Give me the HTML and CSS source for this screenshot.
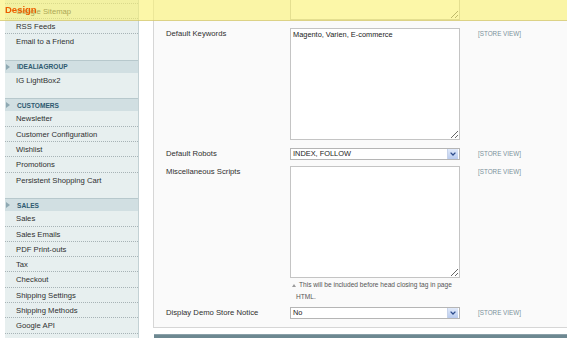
FILE: index.html
```html
<!DOCTYPE html>
<html lang="en">
<head>
  <meta charset="UTF-8" />
  <title>Configuration - Design</title>
  <meta name="viewport" content="width=device-width, initial-scale=1.0" />
  <link rel="stylesheet" href="styles.css">
</head>
<body>
  <div class="page">
    <div class="side">
      <div class="group">
        <div class="group-title"><svg class="tri" width="4" height="6" viewBox="0 0 4 6"><path d="M0 0 L4 3 L0 6 Z" fill="#8ea8b2"/></svg>Catalog</div>
        <ul class="items">
          <li>Catalog</li>
          <li>Configurable Swatches</li>
          <li>Inventory</li>
          <li>Google Sitemap</li>
          <li>RSS Feeds</li>
          <li>Email to a Friend</li>
        </ul>
      </div>
      <div class="group">
        <div class="group-title"><svg class="tri" width="4" height="6" viewBox="0 0 4 6"><path d="M0 0 L4 3 L0 6 Z" fill="#8ea8b2"/></svg>Idealiagroup</div>
        <ul class="items">
          <li>IG LightBox2</li>
        </ul>
      </div>
      <div class="group">
        <div class="group-title"><svg class="tri" width="4" height="6" viewBox="0 0 4 6"><path d="M0 0 L4 3 L0 6 Z" fill="#8ea8b2"/></svg>Customers</div>
        <ul class="items">
          <li>Newsletter</li>
          <li>Customer Configuration</li>
          <li>Wishlist</li>
          <li>Promotions</li>
          <li>Persistent Shopping Cart</li>
        </ul>
      </div>
      <div class="group">
        <div class="group-title"><svg class="tri" width="4" height="6" viewBox="0 0 4 6"><path d="M0 0 L4 3 L0 6 Z" fill="#8ea8b2"/></svg>Sales</div>
        <ul class="items">
          <li>Sales</li>
          <li>Sales Emails</li>
          <li>PDF Print-outs</li>
          <li>Tax</li>
          <li>Checkout</li>
          <li>Shipping Settings</li>
          <li>Shipping Methods</li>
          <li>Google API</li>
          <li>Payment Methods</li>
          <li>Payment Services</li>
        </ul>
      </div>
    </div>

    <div class="main">
      <div class="panel">
        <div class="row">
          <label class="label">Default Description</label>
          <div class="value"><textarea class="area">Default Description</textarea></div>
          <span class="scope">[STORE VIEW]</span>
        </div>
        <div class="row">
          <label class="label">Default Keywords</label>
          <div class="value"><textarea class="area">Magento, Varien, E-commerce</textarea></div>
          <span class="scope">[STORE VIEW]</span>
        </div>
        <div class="row row-select">
          <label class="label">Default Robots</label>
          <div class="value">
            <div class="select">
              <span class="select-text">INDEX, FOLLOW</span>
              <span class="select-btn"><svg width="6" height="4" viewBox="0 0 6 4"><path d="M0.6 0.6 L3 3 L5.4 0.6" fill="none" stroke="#2d4c8c" stroke-width="1.3"/></svg></span>
            </div>
          </div>
          <span class="scope">[STORE VIEW]</span>
        </div>
        <div class="row row-note">
          <label class="label">Miscellaneous Scripts</label>
          <div class="value">
            <textarea class="area"></textarea>
            <p class="note"><svg class="note-arrow" width="4" height="3" viewBox="0 0 4 3"><path d="M0 3 L2 0 L4 3 Z" fill="#9a9a9a"/></svg>This will be included before head closing tag in page<br>HTML.</p>
          </div>
          <span class="scope">[STORE VIEW]</span>
        </div>
        <div class="row">
          <label class="label">Display Demo Store Notice</label>
          <div class="value">
            <div class="select">
              <span class="select-text">No</span>
              <span class="select-btn"><svg width="6" height="4" viewBox="0 0 6 4"><path d="M0.6 0.6 L3 3 L5.4 0.6" fill="none" stroke="#2d4c8c" stroke-width="1.3"/></svg></span>
            </div>
          </div>
          <span class="scope">[STORE VIEW]</span>
        </div>
      </div>
      <div class="next-head"></div>
    </div>
  </div>

  <div class="float-head"><h3>Design</h3></div>
</body>
</html>
```

FILE: styles.css
```css
body {
  margin: 0;
  font-family: "Liberation Sans", Arial, sans-serif;
  background: #fff;
  color: #2f2f2f;
  height: 338px;
  overflow: hidden;
}
.page {
  display: flex;
  align-items: flex-start;
  margin-top: -98px;
}

/* left tabs */
.side {
  width: 133px;
  margin-left: 5px;
  padding-top: 42.5px;
  background: #e7efef;
  border-right: 1px solid #c3d1d4;
  flex-shrink: 0;
}
.group {
  padding-bottom: 10px;
}
.group-title {
  display: flex;
  align-items: center;
  border-top: 1px solid #b7c8cc;
  background: #d1dfe2;
  height: 12.3px;
  font-size: 6.6px;
  font-weight: bold;
  text-transform: uppercase;
  color: #2e5a70;
}
.tri {
  margin: 0 7px 0 1px;
}
.items {
  list-style: none;
  margin: 0;
  padding: 0;
}
.items li {
  font-size: 7.7px;
  line-height: 13.3px;
  padding: 1px 0 0 11px;
  border-bottom: 1px dotted #a7b3b6;
  white-space: nowrap;
}
.items li:last-child {
  border-bottom-color: transparent;
}

/* form panel */
.main {
  flex: 1;
  margin-left: 14px;
}
.panel {
  background: #fafafa;
  border: 1px solid #d6d6d6;
  border-right: none;
  padding: 1px 0 4px 12px;
}
.row {
  display: grid;
  grid-template-columns: 106px 170px auto;
  column-gap: 18px;
  padding: 4px 0;
  align-items: start;
}
.row-select {
  padding-bottom: 2px;
}
.row-note {
  padding-bottom: 0;
}
.label {
  font-size: 7.7px;
  line-height: 12px;
  color: #2f2f2f;
  white-space: nowrap;
}
.scope {
  font-size: 6.3px;
  line-height: 12px;
  color: #7c929b;
}
.value {
  display: flex;
  flex-direction: column;
}
.area {
  display: block;
  box-sizing: border-box;
  width: 170px;
  height: 112px;
  margin: 0;
  padding: 1px 2px;
  border: 1px solid #c4c4c4;
  background: #fff;
  font-family: "Liberation Sans", Arial, sans-serif;
  font-size: 7.4px;
  line-height: 10px;
  color: #222;
}
.select {
  display: flex;
  box-sizing: border-box;
  width: 170px;
  height: 12px;
  border: 1px solid #b5b5b5;
  background: #fff;
}
.select-text {
  flex: 1;
  padding-left: 2px;
  font-size: 7.4px;
  line-height: 10px;
  color: #222;
}
.select-btn {
  display: flex;
  align-items: center;
  justify-content: center;
  width: 10px;
  margin-right: 1px;
  background: linear-gradient(#e1eafa, #b9cbee);
  border-left: 1px solid #c7d3ea;
}
.note {
  margin: 1px 0 0;
  padding-left: 6px;
  font-size: 6.6px;
  line-height: 12px;
  color: #555;
}
.note-arrow {
  margin: 0 3px 0 -4px;
}
.next-head {
  margin: 6px 0 0 1px;
  height: 40px;
  background: #6d8891;
  border-top: 1px solid #8aa0a8;
}

/* floating header */
.float-head {
  position: fixed;
  top: 0;
  left: 0;
  right: 0;
  height: 20px;
  background: rgba(250, 241, 110, 0.6);
  border-bottom: 1px solid rgba(196, 182, 110, 0.55);
}
.float-head h3 {
  margin: 0;
  padding-left: 5px;
  font-size: 9.5px;
  line-height: 20px;
  color: #eb5e00;
}
```
